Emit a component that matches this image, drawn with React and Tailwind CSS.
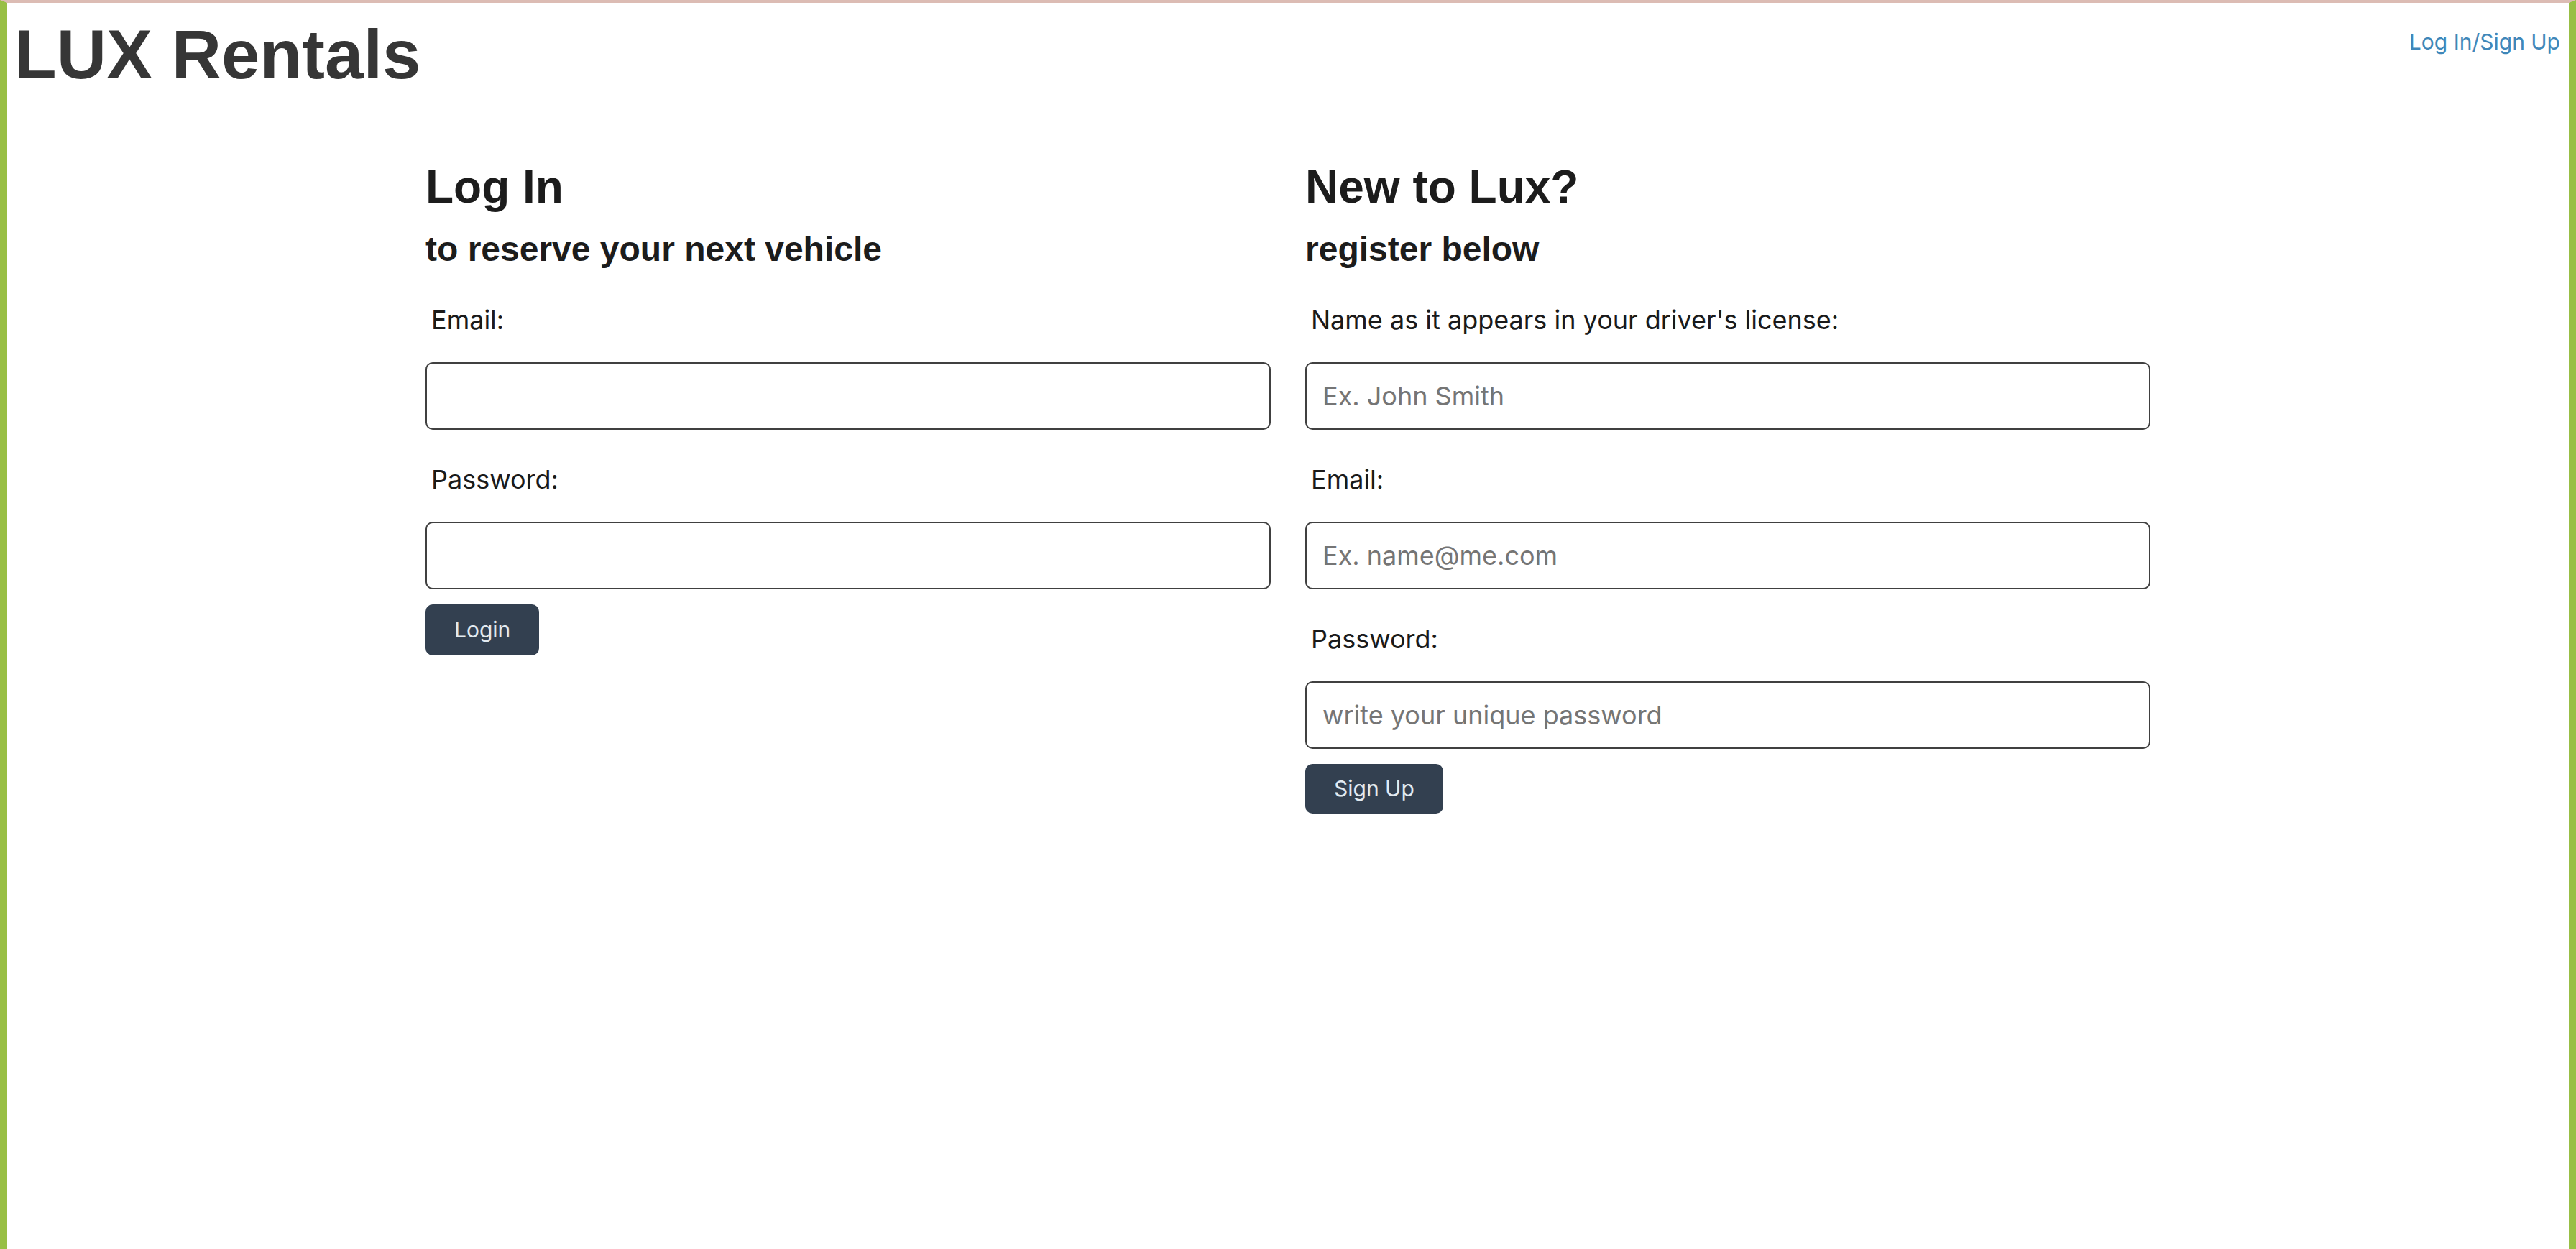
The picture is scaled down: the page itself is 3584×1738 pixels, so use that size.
import { useState } from 'react';

const headFont = { fontFamily: '"Liberation Sans", Arial, Helvetica, sans-serif' };

function Field({ label, type = 'text', placeholder, value, onChange, first }) {
  return (
    <div className={first ? 'mt-[52px]' : 'mt-[47px]'}>
      <label className="block pl-[8px] text-[36px] leading-[44px] text-[#1a1a1a]">{label}</label>
      <input
        type={type}
        value={value}
        onChange={onChange}
        placeholder={placeholder}
        className="mt-[37px] block h-[94px] w-full rounded-[10px] border-2 border-[#404040] bg-white px-[22px] text-[36px] text-[#222] placeholder:text-[#757575] focus:outline-none"
      />
    </div>
  );
}

export default function App() {
  const [login, setLogin] = useState({ email: '', password: '' });
  const [signup, setSignup] = useState({ name: '', email: '', password: '' });

  return (
    <div
      className="box-border h-screen border-t-[4px] border-l-[10px] border-r-[10px] border-t-[#dcbcb4] border-l-[#98bf45] border-r-[#98bf45] bg-white"
      style={{ fontFamily: 'Inter, "Noto Sans", sans-serif' }}
    >
      <header className="flex items-start justify-between">
        <h1
          className="ml-[10px] mt-[24px] text-[96px] font-bold leading-[96px] text-[#363636]"
          style={headFont}
        >
          LUX Rentals
        </h1>
        <a href="#" className="mr-[12px] mt-[35px] text-[30px] leading-[38px] text-[#3f87b9]">
          Log In/Sign Up
        </a>
      </header>

      <main className="mx-auto mt-[104px] grid w-[2400px] grid-cols-2 gap-[48px]">
        <form onSubmit={(e) => e.preventDefault()}>
          <h2 className="text-[64px] font-bold leading-[64px] text-[#1c1c1c]" style={headFont}>Log In</h2>
          <h3 className="mt-[31px] text-[48px] font-bold leading-[48px] text-[#1c1c1c]" style={headFont}>
            to reserve your next vehicle
          </h3>
          <Field
            first
            label="Email:"
            type="email"
            value={login.email}
            onChange={(e) => setLogin({ ...login, email: e.target.value })}
          />
          <Field
            label="Password:"
            type="password"
            value={login.password}
            onChange={(e) => setLogin({ ...login, password: e.target.value })}
          />
          <button
            type="submit"
            className="mt-[21px] h-[71px] rounded-[10px] bg-[#334050] px-[40px] text-[30px] text-[#e2eaf0]"
          >
            Login
          </button>
        </form>

        <form onSubmit={(e) => e.preventDefault()}>
          <h2 className="text-[64px] font-bold leading-[64px] text-[#1c1c1c]" style={headFont}>New to Lux?</h2>
          <h3 className="mt-[31px] text-[48px] font-bold leading-[48px] text-[#1c1c1c]" style={headFont}>
            register below
          </h3>
          <Field
            first
            label="Name as it appears in your driver's license:"
            placeholder="Ex. John Smith"
            value={signup.name}
            onChange={(e) => setSignup({ ...signup, name: e.target.value })}
          />
          <Field
            label="Email:"
            type="email"
            placeholder="Ex. name@me.com"
            value={signup.email}
            onChange={(e) => setSignup({ ...signup, email: e.target.value })}
          />
          <Field
            label="Password:"
            type="password"
            placeholder="write your unique password"
            value={signup.password}
            onChange={(e) => setSignup({ ...signup, password: e.target.value })}
          />
          <button
            type="submit"
            className="mt-[21px] h-[69px] rounded-[10px] bg-[#334050] px-[40px] text-[30px] text-[#e2eaf0]"
          >
            Sign Up
          </button>
        </form>
      </main>
    </div>
  );
}
